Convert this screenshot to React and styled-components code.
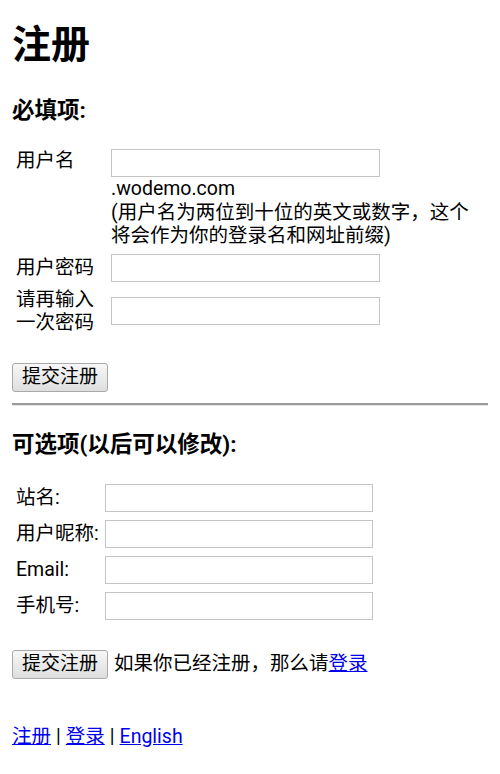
import React from "react";
import styled, { createGlobalStyle } from "styled-components";

const GlobalStyle = createGlobalStyle`
  body {
    margin: 0;
    background: #fff;
    color: #000;
    font-family: Roboto, "Noto Sans CJK SC", sans-serif;
    font-size: 19.5px;
    line-height: 23.5px;
  }
`;

const Page = styled.div`
  display: flex;
  flex-direction: column;
  padding: 0 12px 40px;
  width: 500px;
  box-sizing: border-box;
`;

const Title = styled.h1`
  font-size: 39px;
  font-weight: bold;
  line-height: 46px;
  margin: 22px 0 0;
`;

const SectionTitle = styled.h3`
  font-size: 22.5px;
  font-weight: bold;
  line-height: 28px;
  margin: ${(p) => p.$top}px 0 0;
`;

const FieldGrid = styled.div`
  display: grid;
  grid-template-columns: ${(p) => p.$cols};
  column-gap: ${(p) => p.$colGap}px;
  row-gap: ${(p) => p.$rowGap}px;
  align-items: center;
  padding-left: 4px;
  margin-top: ${(p) => p.$top}px;
`;

const Label = styled.div`
  align-self: ${(p) => (p.$top ? "start" : "center")};
  white-space: ${(p) => (p.$nowrap ? "nowrap" : "normal")};
`;

const Field = styled.div`
  display: flex;
  flex-direction: column;
  align-items: flex-start;
`;

const TextInput = styled.input`
  box-sizing: border-box;
  width: ${(p) => p.$w}px;
  height: 28px;
  margin: 0;
  padding: 2px 4px;
  border: 1.5px solid #c4c4c4;
  border-radius: 0;
  background: #fff;
  font: inherit;
  outline: none;
`;

const Hint = styled.div`
  line-height: 23.5px;
`;

const Button = styled.button`
  box-sizing: border-box;
  height: 29px;
  padding: 0 9px;
  border: 1.5px solid #a9a9a9;
  border-radius: 3px;
  background: linear-gradient(#f7f7f7, #dedede);
  color: #000;
  font-family: Roboto, "Noto Sans CJK SC", sans-serif;
  font-size: 19px;
  line-height: 26px;
  cursor: pointer;
`;

const ButtonRow = styled.div`
  display: flex;
  align-items: center;
  gap: 6px;
  margin-top: ${(p) => p.$top}px;
`;

const Rule = styled.hr`
  margin: 11px 0 0;
  height: 0;
  border: none;
  border-top: 2px solid #9a9a9a;
  border-bottom: 1px solid #e6e6e6;
`;

const Link = styled.a`
  color: #0000ee;
  text-decoration: underline;
`;

const Footer = styled.div`
  margin-top: 46px;
  display: flex;
  align-items: center;
  gap: 5px;
`;

export default function App() {
  return (
    <>
      <GlobalStyle />
      <Page>
        <Title>注册</Title>
        <SectionTitle $top={28}>必填项:</SectionTitle>

        <FieldGrid $cols="95px max-content" $colGap={0} $rowGap={6} $top={25}>
          <Label $top>用户名</Label>
          <Field>
            <TextInput $w={269} type="text" />
            <Hint>
              .wodemo.com
              <br />
              (用户名为两位到十位的英文或数字，这个
              <br />
              将会作为你的登录名和网址前缀)
            </Hint>
          </Field>

          <Label>用户密码</Label>
          <Field>
            <TextInput $w={269} type="password" />
          </Field>

          <Label>
            请再输入
            <br />
            一次密码
          </Label>
          <Field>
            <TextInput $w={269} type="password" />
          </Field>
        </FieldGrid>

        <ButtonRow $top={28}>
          <Button>提交注册</Button>
        </ButtonRow>

        <Rule />

        <SectionTitle $top={24}>可选项(以后可以修改):</SectionTitle>

        <FieldGrid $cols="max-content max-content" $colGap={6} $rowGap={8} $top={26}>
          <Label $nowrap>站名:</Label>
          <Field>
            <TextInput $w={268} type="text" />
          </Field>
          <Label $nowrap>用户昵称:</Label>
          <Field>
            <TextInput $w={268} type="text" />
          </Field>
          <Label $nowrap>Email:</Label>
          <Field>
            <TextInput $w={268} type="text" />
          </Field>
          <Label $nowrap>手机号:</Label>
          <Field>
            <TextInput $w={268} type="text" />
          </Field>
        </FieldGrid>

        <ButtonRow $top={30}>
          <Button>提交注册</Button>
          <span>
            如果你已经注册，那么请<Link href="#">登录</Link>
          </span>
        </ButtonRow>

        <Footer>
          <Link href="#">注册</Link>|<Link href="#">登录</Link>|
          <Link href="#">English</Link>
        </Footer>
      </Page>
    </>
  );
}
